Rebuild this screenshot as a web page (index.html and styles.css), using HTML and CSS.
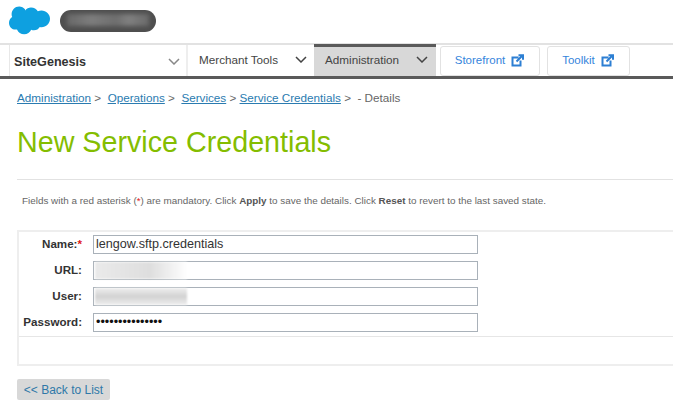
FILE: index.html
```html
<!DOCTYPE html>
<html lang="en">
<head>
<meta charset="utf-8">
<title>New Service Credentials</title>
<link rel="stylesheet" href="styles.css">
</head>
<body>
<header class="top">
  <svg class="logo" viewBox="0 0 42 29" width="42" height="29"><path fill="#0ea0e0" d="M17 4.500C18.500 2.500 20.800 1.500 23 1.500C26 1.500 28.500 3 29.800 5.300C31 4.800 32.200 4.500 33.500 4.500C38.200 4.500 42 8.200 42 12.800C42 17.500 38.200 21.200 33.500 21.200C32.900 21.200 32.300 21.100 31.800 21C30.700 23 28.500 24.300 26 24.300C25 24.300 24 24.100 23.200 23.700C22 26.400 19.300 28.300 16.200 28.300C12.900 28.300 10.100 26.300 9 23.400C8.500 23.500 8 23.600 7.500 23.600C3.900 23.600 1 20.600 1 16.900C1 14.500 2.300 12.300 4.200 11.100C3.800 10.200 3.600 9.200 3.600 8.200C3.600 4 7 .5 11.200 .5C13.600 .5 15.700 1.600 17 3.300Z"/></svg>
  <div class="pill"><span class="pill-blur"></span></div>
</header>
<nav class="nav">
  <div class="site"><span>SiteGenesis</span><svg class="chev chev-light" viewBox="0 0 12 7" width="12" height="7"><path d="M1 1l5 5 5-5"/></svg></div>
  <div class="menu menu-merchant"><span>Merchant Tools</span><svg class="chev" viewBox="0 0 12 7" width="12" height="7"><path d="M1 1l5 5 5-5"/></svg></div>
  <div class="menu menu-active"><span>Administration</span><svg class="chev" viewBox="0 0 12 7" width="12" height="7"><path d="M1 1l5 5 5-5"/></svg></div>
  <a class="ext ext-store" href="#">Storefront<svg class="ext-icon" viewBox="0 0 13 13" width="13" height="13"><path d="M7.500 3.500H1.500V11.500H9.500V6.500M5.500 7.500L11.500 1.500M7.500 1.200H12V5.700"/></svg></a>
  <a class="ext ext-tool" href="#">Toolkit<svg class="ext-icon" viewBox="0 0 13 13" width="13" height="13"><path d="M7.500 3.500H1.500V11.500H9.500V6.500M5.500 7.500L11.500 1.500M7.500 1.200H12V5.700"/></svg></a>
</nav>
<main class="content">
  <p class="crumbs"><a href="#">Administration</a> &gt;&nbsp; <a href="#">Operations</a> &gt;&nbsp; <a href="#">Services</a> &gt; <a href="#">Service Credentials</a> &gt;&nbsp; - Details</p>
  <h1 class="title">New Service Credentials</h1>
  <p class="note">Fields with a red asterisk (<span class="req">*</span>) are mandatory. Click <b>Apply</b> to save the details. Click <b>Reset</b> to revert to the last saved state.</p>
  <form class="panel">
    <div class="fields">
      <label class="lbl lbl-first" for="f-name">Name:<span class="req">*</span></label>
      <input class="inp inp-first" id="f-name" type="text" value="lengow.sftp.credentials">
      <label class="lbl" for="f-url">URL:</label>
      <div class="inp-wrap"><input class="inp" id="f-url" type="text"><span class="smudge smudge-url"></span></div>
      <label class="lbl" for="f-user">User:</label>
      <div class="inp-wrap"><input class="inp" id="f-user" type="text"><span class="smudge smudge-user"></span></div>
      <label class="lbl" for="f-pass">Password:</label>
      <input class="inp" id="f-pass" type="password" value="aaaaaaaaaaaaaaa">
    </div>
    <div class="panel-foot"></div>
  </form>
  <a class="back" href="#">&lt;&lt; Back to List</a>
</main>
</body>
</html>
```
FILE: styles.css
```css
* { box-sizing: border-box; }
html, body { margin: 0; padding: 0; background: #fff; }
body { font-family: "Liberation Sans", Arial, sans-serif; color: #444; height: 419px; overflow: hidden; }

.top { height: 43px; display: flex; align-items: flex-start; padding: 6px 0 0 8px; gap: 10px; }
.logo { display: block; }
.pill { width: 96px; height: 22px; margin-top: 4px; border-radius: 11px; background: #4f4f4f; padding: 4px 7px; overflow: hidden; }
.pill-blur { display: block; height: 12px; background: linear-gradient(90deg, #686868, #7d7d7d 30%, #6e6e6e 60%, #808080 75%, #6a6a6a); filter: blur(2px); }

.nav { height: 36px; display: flex; border-top: 2px solid #e2e2e2; border-bottom: 3px solid #5a5a5a; padding-left: 9px; }
.site { width: 179px; display: flex; align-items: center; justify-content: space-between; padding: 2px 6px 0 4px; font-size: 12.600px; font-weight: bold; color: #333; border-left: 1px solid #e8e8e8; border-right: 2px solid #eee; }
.chev { fill: none; stroke: #444; stroke-width: 1.500; flex: none; }
.chev-light { stroke: #888; }
.menu { display: flex; align-items: center; justify-content: space-between; font-size: 11.700px; color: #444; }
.menu-merchant { width: 126px; padding: 0 7px 2px 11px; }
.menu-active { width: 122px; margin-top: -1px; padding: 0 8px 4px 11px; background: #d8d8d8; border-top: 3px solid #5a5a5a; }
.ext { display: flex; align-items: center; justify-content: center; gap: 6px; margin: 1px 0 0 0; height: 30px; padding: 0 1px 2px 0; font-size: 11.500px; color: #3585dc; text-decoration: none; background: #fff; border: 1px solid #e2e2e2; border-radius: 3px; }
.ext-store { width: 100px; margin-left: 4px; }
.ext-tool { width: 83px; margin-left: 7px; }
.ext-icon { fill: none; stroke: #2d7fd3; stroke-width: 2; flex: none; }

.content { padding: 12px 0 0 17px; }
.crumbs { margin: 0; font-size: 11.700px; line-height: 13px; color: #666; }
.crumbs a { color: #2a7bb0; }
.title { margin: 21px 0 0; font-size: 28.700px; line-height: 34px; font-weight: normal; color: #84bd00; }
.note { margin: 20px 0 0; padding: 14px 0 0 5px; height: 51px; border-top: 1px solid #e2e2e2; font-size: 9.900px; line-height: 13px; color: #666; }
.note b { color: #555; }
.req { color: #e01818; }

.panel { border: 2px solid #eeeeee; border-width: 2px 0 2px 2px; }
.fields { display: grid; grid-template-columns: 63px 385px; column-gap: 11px; row-gap: 7px; align-items: center; padding: 3px 0 4px; border-bottom: 1px solid #e6e6e6; }
.lbl { text-align: right; padding-bottom: 2px; font-size: 11.600px; font-weight: bold; color: #333; }
.lbl-first, .inp-first { margin-bottom: 1px; }
.inp-wrap { position: relative; height: 19px; }
.inp { display: block; width: 385px; height: 19px; padding: 0 2px 1px; margin: 0; border: 1px solid #a9b1b9; border-radius: 0; background: #fff; font-family: "Liberation Sans", Arial, sans-serif; font-size: 12.600px; color: #333; outline: none; }
#f-pass { color: #111; }
.smudge { position: absolute; left: 2px; top: 1px; height: 17px; width: 92px; }
.smudge-url { background: linear-gradient(90deg, #eaeaea, #dedede 60%, #fff); filter: blur(1px); }
.smudge-user { background: linear-gradient(#efefef, #d2d2d2 50%, #efefef); filter: blur(1px); }
.panel-foot { height: 27px; }

.back { display: block; margin-top: 13px; width: 93px; height: 21px; line-height: 22px; text-align: center; background: #d8d8d8; border-radius: 2px; font-size: 12px; color: #2f78a8; text-decoration: none; }
```
